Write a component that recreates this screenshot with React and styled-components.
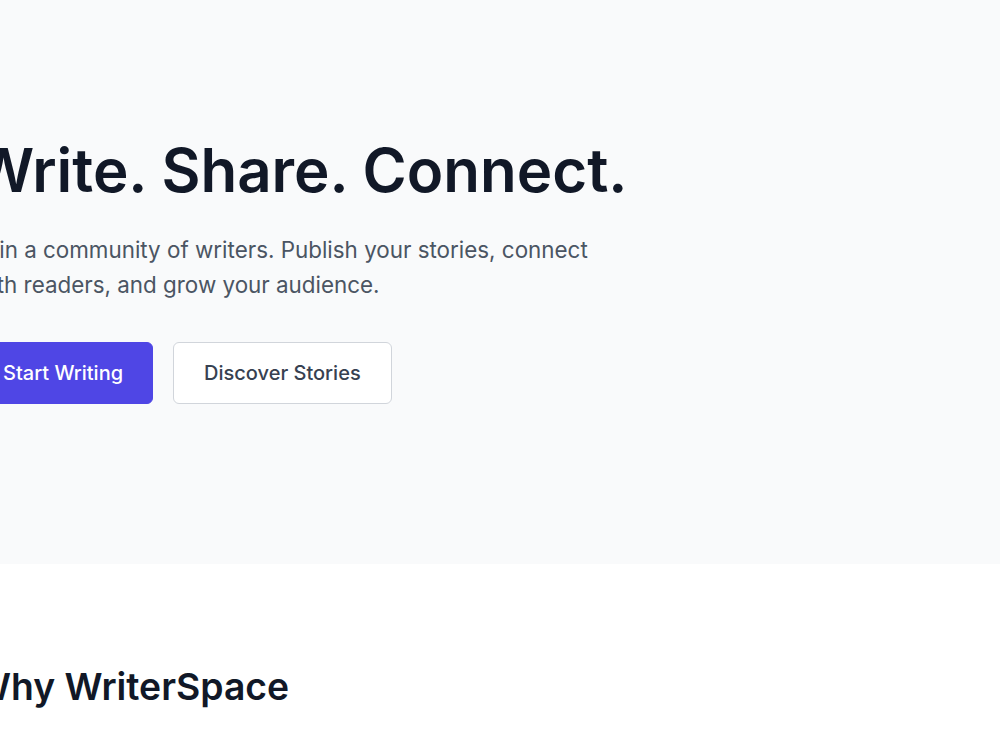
import React from "react";
import styled, { createGlobalStyle } from "styled-components";

const Global = createGlobalStyle`
  html, body { margin: 0; padding: 0; background: #ffffff; overflow: hidden; }
  body { font-family: Inter, "Noto Sans", sans-serif; color: #111827; -webkit-font-smoothing: antialiased; }
  * { box-sizing: border-box; }
`;

const Hero = styled.section`
  background: #f9fafb;
  padding: 133px 0 160px;
`;

const Container = styled.div`
  margin-left: -27px;
  width: 1100px;
`;

const Title = styled.h1`
  margin: 0;
  font-size: 60px;
  line-height: 75px;
  font-weight: 600;
  color: #111827;
`;

const Lead = styled.p`
  margin: 24px 0 0;
  max-width: 650px;
  font-size: 22.4px;
  line-height: 35px;
  color: #4b5563;
`;

const Actions = styled.div`
  display: flex;
  gap: 20px;
  margin-top: 40px;
`;

const Button = styled.button`
  font-family: inherit;
  font-size: 20px;
  line-height: 28px;
  font-weight: 500;
  padding: ${(p) => (p.$primary ? "16px 29px" : "16px 30px")};
  border-radius: 6px;
  border: 1px solid ${(p) => (p.$primary ? "#4f46e5" : "#d1d5db")};
  background: ${(p) => (p.$primary ? "#4f46e5" : "#ffffff")};
  color: ${(p) => (p.$primary ? "#ffffff" : "#374151")};
  cursor: pointer;
`;

const Features = styled.section`
  background: #ffffff;
  padding: 103px 0 80px;
`;

const SectionTitle = styled.h2`
  margin: 0;
  font-size: 37.3px;
  line-height: 40px;
  font-weight: 600;
  color: #111827;
`;

export default function App() {
  return (
    <>
      <Global />
      <Hero>
        <Container>
          <Title>Write. Share. Connect.</Title>
          <Lead>
            Join a community of writers. Publish your stories, connect with
            readers, and grow your audience.
          </Lead>
          <Actions>
            <Button $primary>Start Writing</Button>
            <Button>Discover Stories</Button>
          </Actions>
        </Container>
      </Hero>
      <Features>
        <Container>
          <SectionTitle>Why WriterSpace</SectionTitle>
        </Container>
      </Features>
    </>
  );
}
